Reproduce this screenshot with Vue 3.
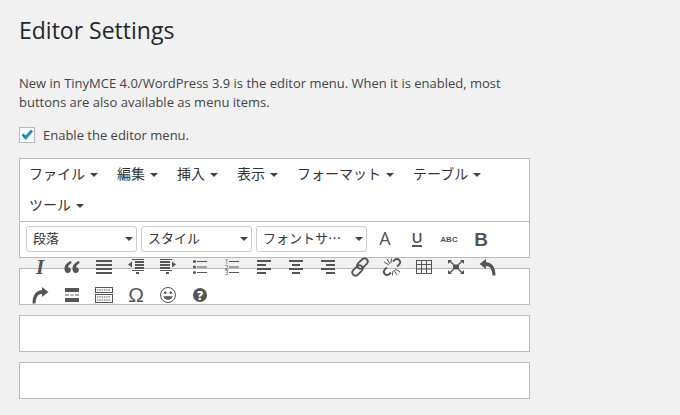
<script setup>
const menus = ['ファイル', '編集', '挿入', '表示', 'フォーマット', 'テーブル', 'ツール']
const selects = ['段落', 'スタイル', 'フォントサ…']
</script>

<template>
  <main class="page">
    <h1 class="title">Editor Settings</h1>
    <p class="intro">New in TinyMCE 4.0/WordPress 3.9 is the editor menu. When it is enabled, most buttons are also available as menu items.</p>
    <label class="enable">
      <span class="check">
        <svg width="14" height="14" viewBox="0 0 14 14"><path d="M1.5 7.2 L3.6 5.2 L5.6 7.4 L11 1.6 L13 3.6 L5.7 12 Z" fill="#1e8cbe" /></svg>
      </span>
      Enable the editor menu.
    </label>

    <section class="editor">
      <nav class="menubar">
        <div v-for="m in menus" :key="m" class="menu"><span class="lift">{{ m }}</span><i class="caret"></i></div>
      </nav>
      <div class="toolbar">
        <div v-for="s in selects" :key="s" class="select"><span class="lift">{{ s }}</span><i class="caret"></i></div>
        <button class="btn"><svg viewBox="0 0 20 20"><text x="10" y="16" text-anchor="middle" class="t" font-size="18" font-weight="500">A</text></svg></button>
        <button class="btn"><svg viewBox="0 0 20 20"><text x="10" y="14" text-anchor="middle" class="t" font-size="15" font-weight="600">U</text><rect x="5" y="16" width="10" height="2" /></svg></button>
        <button class="btn"><svg viewBox="0 0 20 20"><text x="10" y="13" text-anchor="middle" class="l" font-size="8" font-weight="700">ABC</text></svg></button>
        <button class="btn"><svg viewBox="0 0 20 20"><text x="10" y="16.5" text-anchor="middle" class="l" font-size="19" font-weight="700">B</text></svg></button>

        <button class="btn"><svg viewBox="0 0 20 20"><text x="10" y="17" text-anchor="middle" class="s" font-size="21" font-weight="700" font-style="italic">I</text></svg></button>
        <button class="btn"><svg viewBox="0 0 20 20"><path d="M9 4 C5 5.5 2.5 8 2.5 12 C2.5 14.5 4 16 5.8 16 C7.5 16 8.8 14.8 8.8 13 C8.8 11.3 7.6 10.2 6 10.2 C6.3 8.6 7.6 7.2 9.6 6 Z M17 4 C13 5.5 10.5 8 10.5 12 C10.5 14.5 12 16 13.8 16 C15.5 16 16.8 14.8 16.8 13 C16.8 11.3 15.6 10.2 14 10.2 C14.3 8.6 15.6 7.2 17.6 6 Z" /></svg></button>
        <button class="btn"><svg viewBox="0 0 20 20"><rect x="2" y="3" width="16" height="2" /><rect x="2" y="7" width="16" height="2" /><rect x="2" y="11" width="16" height="2" /><rect x="2" y="15" width="16" height="2" /></svg></button>
        <button class="btn"><svg viewBox="0 0 20 20"><rect x="6" y="2" width="12" height="1" /><rect x="9" y="4" width="9" height="2" /><rect x="9" y="7" width="9" height="2" /><rect x="9" y="10" width="9" height="2" /><rect x="6" y="13" width="12" height="1" /><rect x="10" y="15" width="3" height="2" /><path d="M2 7.5 L6 4.5 V10.5 Z" /></svg></button>
        <button class="btn"><svg viewBox="0 0 20 20"><rect x="2" y="2" width="12" height="1" /><rect x="2" y="4" width="10" height="2" /><rect x="2" y="7" width="10" height="2" /><rect x="2" y="10" width="10" height="2" /><rect x="2" y="13" width="12" height="1" /><rect x="8" y="15" width="3" height="2" /><path d="M18 7.5 L14 4.5 V10.5 Z" /></svg></button>
        <button class="btn"><svg viewBox="0 0 20 20"><circle cx="4.5" cy="4.5" r="1.5" /><circle cx="4.5" cy="10" r="1.5" /><circle cx="4.5" cy="15.5" r="1.5" /><rect x="7" y="4" width="10" height="1" /><rect x="7" y="9.5" width="10" height="1" /><rect x="7" y="15" width="10" height="1" /></svg></button>
        <button class="btn"><svg viewBox="0 0 20 20"><text x="4.5" y="7" text-anchor="middle" class="t" font-size="6.5">1</text><text x="4.5" y="12.5" text-anchor="middle" class="t" font-size="6.5">2</text><text x="4.5" y="18" text-anchor="middle" class="t" font-size="6.5">3</text><rect x="7" y="4" width="10" height="1" /><rect x="7" y="9.5" width="10" height="1" /><rect x="7" y="15" width="10" height="1" /></svg></button>
        <button class="btn"><svg viewBox="0 0 20 20"><rect x="3" y="3" width="14" height="2" /><rect x="3" y="7" width="9" height="2" /><rect x="3" y="11" width="14" height="2" /><rect x="3" y="15" width="9" height="2" /></svg></button>
        <button class="btn"><svg viewBox="0 0 20 20"><rect x="3" y="3" width="14" height="2" /><rect x="6" y="7" width="8" height="2" /><rect x="3" y="11" width="14" height="2" /><rect x="6" y="15" width="8" height="2" /></svg></button>
        <button class="btn"><svg viewBox="0 0 20 20"><rect x="3" y="3" width="14" height="2" /><rect x="8" y="7" width="9" height="2" /><rect x="3" y="11" width="14" height="2" /><rect x="8" y="15" width="9" height="2" /></svg></button>
        <button class="btn"><svg viewBox="0 0 20 20"><g class="line w2"><rect x="9.3" y="0.5" width="6.4" height="12" rx="3.2" transform="rotate(45 12.5 6.5)" /><rect x="4.3" y="7.5" width="6.4" height="12" rx="3.2" transform="rotate(45 7.5 13.5)" /></g></svg></button>
        <button class="btn"><svg viewBox="0 0 20 20"><g class="line w2"><path d="M11 4.5 L12.5 3 C14 1.8 16 1.8 17.2 3 C18.4 4.2 18.4 6.2 17.2 7.5 L15 9.6" /><path d="M9 15.5 L7.5 17 C6 18.2 4 18.2 2.8 17 C1.6 15.8 1.6 13.8 2.8 12.5 L5 10.4" /></g><g class="line"><path d="M5 2 L8 7 M2 5 L7 8 M9.5 1.5 L9 6 M15 18 L12 13 M18 15 L13 12 M10.5 18.5 L11 14" /></g></svg></button>
        <button class="btn"><svg viewBox="0 0 20 20"><g class="line"><rect x="2.5" y="3.5" width="15" height="13" /><path d="M2.5 7.5 H17.5 M2.5 12 H17.5 M7.5 3.5 V16.5 M12.5 3.5 V16.5" /></g></svg></button>
        <button class="btn"><svg viewBox="0 0 20 20"><rect x="7" y="7.5" width="6" height="5" /><path d="M2 3 H6 L4.8 4.2 L8 7 L7 8 L3.8 5.2 L2 7 Z M18 3 H14 L15.2 4.2 L12 7 L13 8 L16.2 5.2 L18 7 Z M2 17 H6 L4.8 15.8 L8 13 L7 12 L3.8 14.8 L2 13 Z M18 17 H14 L15.2 15.8 L12 13 L13 12 L16.2 14.8 L18 13 Z" /></svg></button>
        <button class="btn"><svg viewBox="0 0 20 20"><path d="M8 2 L1.5 7 L8 12 V9 C12 9 14 12 14.5 18.5 H17.5 C17.5 10 14 5.5 8 5 Z" /></svg></button>

        <button class="btn"><svg viewBox="0 0 20 20"><path d="M12 2 L18.5 7 L12 12 V9 C8 9 6 12 5.5 18.5 H2.5 C2.5 10 6 5.5 12 5 Z" /></svg></button>
        <button class="btn"><svg viewBox="0 0 20 20"><rect x="3" y="3" width="14" height="4" /><rect x="3" y="9.5" width="4" height="1" /><rect x="8.5" y="9.5" width="3" height="1" /><rect x="13" y="9.5" width="4" height="1" /><rect x="3" y="13" width="14" height="4" /></svg></button>
        <button class="btn"><svg viewBox="0 0 20 20"><g class="line"><rect x="1.5" y="2.5" width="17" height="5" /><rect x="1.5" y="9.5" width="17" height="8" /><path d="M3 5 H17 M3 12 H17 M3 15 H17" stroke-dasharray="1.5 .8" /></g></svg></button>
        <button class="btn"><svg viewBox="0 0 20 20"><text x="10" y="17" text-anchor="middle" class="l" font-size="21">Ω</text></svg></button>
        <button class="btn"><svg viewBox="0 0 20 20"><circle class="line" cx="10" cy="10" r="7.5" /><circle cx="7.3" cy="7.8" r="1.3" /><circle cx="12.7" cy="7.8" r="1.3" /><path d="M5.2 11.3 C7 15.8 13 15.8 14.8 11.3 Z" /></svg></button>
        <button class="btn"><svg viewBox="0 0 20 20"><circle cx="10" cy="10" r="7" /><text x="10" y="14.5" text-anchor="middle" class="t help" font-size="12" font-weight="800">?</text></svg></button>
      </div>
    </section>

    <div class="box"></div>
    <div class="box"></div>
    <div class="box"></div>
  </main>
</template>

<style scoped>
.page {
  box-sizing: border-box;
  width: 680px;
  height: 415px;
  padding: 0 19px;
  overflow: hidden;
  background: #f1f1f1;
  color: #444;
  font-family: "Open Sans", "Noto Sans CJK JP", sans-serif;
  font-size: 13px;
}
.title {
  margin: 0;
  padding-top: 15px;
  color: #23282d;
  font-size: 23px;
  font-weight: 400;
  line-height: 31px;
}
.intro {
  width: 511px;
  margin: 28px 0 0;
  line-height: 19px;
}
.enable {
  display: flex;
  align-items: center;
  gap: 8px;
  margin-top: 15px;
  height: 16px;
}
.check {
  box-sizing: border-box;
  display: flex;
  align-items: center;
  justify-content: center;
  width: 16px;
  height: 16px;
  background: #fff;
  border: 1px solid #b4b9be;
}
.editor {
  box-sizing: border-box;
  position: relative;
  z-index: 1;
  width: 511px;
  height: 100px;
  margin-top: 15px;
  background: #fff;
  border: 1px solid #bbb;
}
.menubar {
  display: flex;
  flex-wrap: wrap;
  border-bottom: 1px solid #bbb;
}
.menu {
  display: flex;
  align-items: center;
  height: 31px;
  padding: 0 10px 0 9px;
  color: #333;
  font-family: "Noto Sans CJK JP", sans-serif;
  font-size: 14px;
}
.lift {
  padding-bottom: 4px;
}
.caret {
  width: 0;
  height: 0;
  margin-left: 5px;
  border-top: 4px solid #444;
  border-left: 4px solid transparent;
  border-right: 4px solid transparent;
}
.toolbar {
  display: flex;
  flex-wrap: wrap;
  width: 501px;
  padding: 3px 0 0 4px;
}
.select {
  box-sizing: border-box;
  display: flex;
  align-items: center;
  justify-content: space-between;
  width: 111px;
  height: 26px;
  margin: 1px 2px 1px 2px;
  padding: 0 3px 0 6px;
  border: 1px solid #ccc;
  border-radius: 3px;
  color: #333;
  font-family: "Noto Sans CJK JP", sans-serif;
  font-size: 13px;
}
.btn {
  display: flex;
  align-items: center;
  justify-content: center;
  width: 32px;
  height: 28px;
  padding: 0;
  border: 0;
  background: none;
}
.btn svg {
  display: block;
  width: 20px;
  height: 20px;
  overflow: visible;
  fill: #555;
}
.btn svg .line {
  fill: none;
  stroke: #555;
  stroke-width: 1;
}
.btn svg .w2 {
  stroke-width: 1.8;
}
.t {
  font-family: "Open Sans", sans-serif;
}
.l {
  font-family: "Liberation Sans", sans-serif;
}
.s {
  font-family: "Liberation Serif", serif;
}
.btn svg .help {
  fill: #fff;
}
.box {
  box-sizing: border-box;
  width: 511px;
  height: 37px;
  margin-top: 10px;
  background: #fff;
  border: 1px solid #bbb;
}
</style>
